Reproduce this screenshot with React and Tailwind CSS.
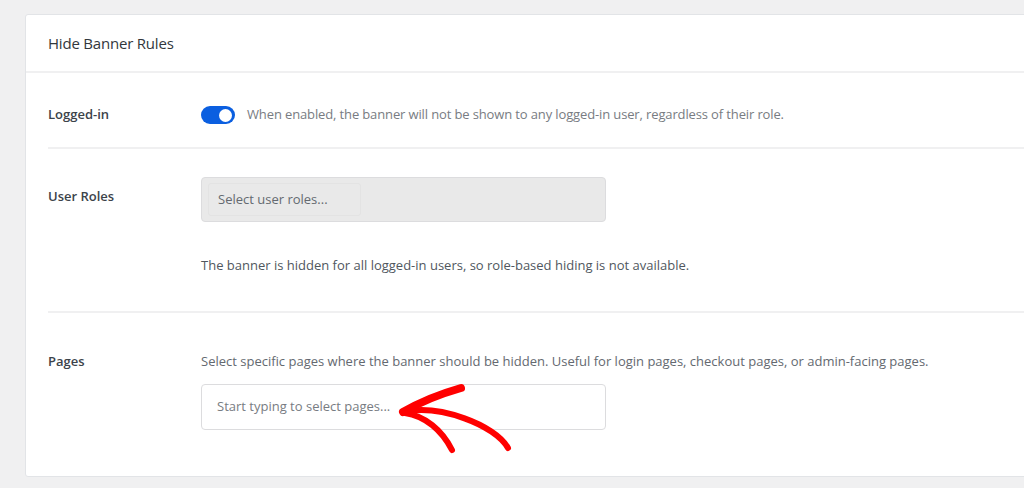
export default function App() {
  const font = { fontFamily: '"Open Sans", "Noto Sans", Arial, sans-serif' }
  return (
    <div className="relative w-[1024px] h-[488px] overflow-hidden bg-[#f0f0f1] pt-[14px] pl-[25px]" style={font}>
      <div className="w-[1010px] h-[463px] bg-white border border-[#e2e4e7] rounded-[3px]">
        {/* Header */}
        <div className="h-[58px] flex items-center px-[22px] border-b-2 border-[#f0f0f1]">
          <h2 className="text-[15px] font-medium text-[#32373c] tracking-[-0.2px]">Hide Banner Rules</h2>
        </div>

        <div className="pl-[22px]">
          {/* Logged-in */}
          <div className="h-[76px] flex items-center pt-[10px] border-b-2 border-[#f0f0f1]">
            <div className="w-[153px] text-[13px] font-semibold text-[#3c434a]">Logged-in</div>
            <div className="flex items-center gap-3">
              <div className="w-[34px] h-[18px] rounded-full bg-[#0b5fe0] flex items-center justify-end px-[3px]">
                <div className="w-[13px] h-[13px] rounded-full bg-white" />
              </div>
              <span className="text-[13px] text-[#787c82] tracking-[-0.13px]">When enabled, the banner will not be shown to any logged-in user, regardless of their role.</span>
            </div>
          </div>

          {/* User Roles */}
          <div className="h-[164px] flex pt-[28px] border-b-2 border-[#f0f0f1]">
            <div className="w-[153px] text-[13px] font-semibold text-[#3c434a] pt-[10px]">User Roles</div>
            <div>
              <div className="w-[405px] h-[45px] bg-[#e9e9e9] border border-[#dcdcde] rounded-[4px] flex items-center px-[6px]">
                <div className="h-[33px] w-[153px] rounded-[3px] border border-[#e3e3e3] flex items-center px-[9px] text-[13px] text-[#646970]">Select user roles...</div>
              </div>
              <p className="mt-[34px] text-[13px] text-[#50575e]">The banner is hidden for all logged-in users, so role-based hiding is not available.</p>
            </div>
          </div>

          {/* Pages */}
          <div className="flex pt-[39px]">
            <div className="w-[153px] text-[13px] font-semibold text-[#3c434a]">Pages</div>
            <div>
              <p className="text-[13px] text-[#646970]">Select specific pages where the banner should be hidden. Useful for login pages, checkout pages, or admin-facing pages.</p>
              <div className="mt-[12px] w-[405px] h-[46px] bg-white border border-[#dcdcde] rounded-[4px] flex items-center px-[15px] text-[13px] text-[#787c82]">Start typing to select pages...</div>
            </div>
          </div>
        </div>
      </div>

      {/* annotation arrow */}
      <svg className="absolute left-0 top-0" width="1024" height="488" viewBox="0 0 1024 488" fill="none">
        <path d="M461 388 C440 394 420 402 403 412" stroke="#ff0000" strokeWidth="8" strokeLinecap="round" />
        <path d="M403 412 C440 404 495 425 508 448" stroke="#ff0000" strokeWidth="6" strokeLinecap="round" />
        <path d="M405 413 C425 416 442 430 452 450" stroke="#ff0000" strokeWidth="6" strokeLinecap="round" />
      </svg>
    </div>
  )
}
